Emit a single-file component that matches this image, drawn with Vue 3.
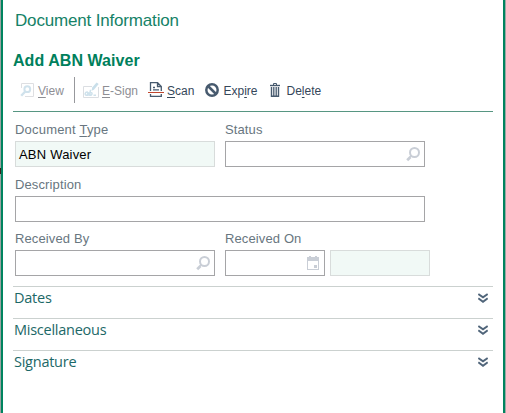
<script setup>
const sections = ['Dates', 'Miscellaneous', 'Signature']
</script>

<template>
  <div class="page">
    <main class="dialog">
      <header class="caption">Document Information</header>
      <h1 class="title">Add ABN Waiver</h1>

      <nav class="toolbar">
        <button class="tool view off" disabled>
          <svg width="14" height="14" viewBox="0 0 14 14" fill="none">
            <path d="M1.5 5V.5H13.5V13.5H5" stroke="#dedfe2" />
            <circle cx="7.3" cy="6.2" r="2.9" stroke="#d0e2ec" stroke-width="2" />
            <path d="M5 8.7L1.2 12.8" stroke="#d0e2ec" stroke-width="2.4" />
          </svg>
          <span><u>V</u>iew</span>
        </button>
        <i class="divider"></i>
        <button class="tool esign off" disabled>
          <svg width="16" height="16" viewBox="0 0 16 16" fill="none">
            <path d="M9 4.5H.5V15.5H15.5V5" stroke="#dbdee2" />
            <path d="M4.8 10c-3-.6-3.4 3.4-1.4 3.3 1.2 0 1.8-3.3 1.8-3.3l-.4 3.2c1.5 0 2.7-4 2.7-5.4l-.8 5.4c2.4.6 3.3-2.9 1-2.8M10.5 13.2h2.5" stroke="#cfe2ec" stroke-width="1.5" />
            <path d="M8.6 8.8l.6-3.2 4.4-5.2 2.1 1.7-4.8 5.6z" fill="#c9dfea" />
          </svg>
          <span><u>E</u>-Sign</span>
        </button>
        <button class="tool scan">
          <svg width="16" height="15" viewBox="0 0 16 15" fill="none">
            <path d="M2.5 9V.7H9.6L13.3 4.4V9M9.5 .8V4.5H13M5 5.5h2M5 7.8h6M2.5 12v2.3h10.8V12" stroke="#475a6e" stroke-width="1.3" />
            <path d="M0 10.5H16" stroke="#c1472e" />
          </svg>
          <span><u>S</u>can</span>
        </button>
        <button class="tool expire">
          <svg width="14" height="14" viewBox="0 0 14 14" fill="none" stroke="#475a6e" stroke-width="2.5">
            <circle cx="7" cy="7" r="5.7" />
            <path d="M3 3L11 11" />
          </svg>
          <span>Exp<u>i</u>re</span>
        </button>
        <button class="tool delete">
          <svg width="10" height="14" viewBox="0 0 10 14" fill="none" stroke="#475a6e">
            <path d="M3.5 2V.5h3V2" />
            <path d="M0 2.5H10" stroke-width="1.4" />
            <path d="M1.5 4V13.3H8.5V4" stroke-width="1.4" />
            <path d="M3.8 4V13M6.2 4V13" stroke-width="1.3" />
          </svg>
          <span>De<u>l</u>ete</span>
        </button>
      </nav>

      <form class="form">
        <div class="row">
          <div class="field">
            <label class="l-type">Document <u>T</u>ype</label>
            <div class="box readonly">ABN Waiver</div>
          </div>
          <div class="field">
            <label>Status</label>
            <div class="box">
              <svg class="lens" width="14" height="15" viewBox="0 0 14 15" fill="none" stroke="#c9ced6">
                <circle cx="8.5" cy="5.5" r="4.5" stroke-width="2" />
                <path d="M5.3 8.7L3.8 10.3" stroke-width="1.5" />
                <path d="M4.5 10L1.2 13.3" stroke-width="2.7" />
              </svg>
            </div>
          </div>
        </div>
        <div class="row">
          <div class="field wide">
            <label>Description</label>
            <div class="box"></div>
          </div>
        </div>
        <div class="row">
          <div class="field">
            <label>Received By</label>
            <div class="box">
              <svg class="lens" width="14" height="15" viewBox="0 0 14 15" fill="none" stroke="#c9ced6">
                <circle cx="8.5" cy="5.5" r="4.5" stroke-width="2" />
                <path d="M5.3 8.7L3.8 10.3" stroke-width="1.5" />
                <path d="M4.5 10L1.2 13.3" stroke-width="2.7" />
              </svg>
            </div>
          </div>
          <div class="field">
            <label>Received On</label>
            <div class="pair">
              <div class="box">
                <svg class="cal" width="12" height="14" viewBox="0 0 12 14">
                  <path fill="#c9ced6" fill-rule="evenodd" d="M2 0h2v1h4V0h2v1h2v13H0V1h2zM1 5v8h10V5z" />
                  <path fill="#c9ced6" d="M7 9h3v3H7z" />
                </svg>
              </div>
              <div class="box readonly"></div>
            </div>
          </div>
        </div>
      </form>

      <section v-for="name in sections" :key="name" class="section">
        <span>{{ name }}</span>
        <svg width="10" height="10" viewBox="0 0 10 10" fill="none" stroke="#50657a" stroke-width="2">
          <path d="M.3 1L5 4.3L9.7 1M.3 5.3L5 8.7L9.7 5.3" />
        </svg>
      </section>
    </main>
  </div>
</template>

<style>
body { overflow: hidden; }
</style>

<style scoped>
* { box-sizing: border-box; }
.page {
  height: 413px;
  padding: 0 1px;
  background: linear-gradient(#9ba3a2 168px, #3c1f1c 168px, #3c1f1c 174px, #9ba3a2 174px) left / 1px 100% no-repeat, #9ba9a5;
  font-family: "Liberation Sans", Arial, sans-serif;
}
.dialog {
  width: 504px;
  height: 413px;
  padding: 0 10px;
  border: solid #00845f;
  border-width: 0 2px;
  background: #fff;
}
.caption {
  height: 49px;
  padding: 11px 0 0 2px;
  font-size: 17px;
  line-height: 20px;
  letter-spacing: -.17px;
  color: #158267;
  white-space: nowrap;
}
.title {
  height: 28px;
  margin: 0;
  padding-top: 2px;
  font-size: 16px;
  line-height: 20px;
  letter-spacing: .06px;
  color: #00805c;
  white-space: nowrap;
}
.toolbar {
  display: flex;
  height: 35px;
  border-bottom: 1px solid #579682;
}
.tool {
  display: flex;
  align-items: flex-start;
  padding: 6px 0 0;
  border: 0;
  background: none;
  font: 12px/17px "Liberation Sans", Arial, sans-serif;
  color: #35475a;
  white-space: nowrap;
}
.tool.off { color: #8e8e94; }
.tool svg { flex: none; }
.tool.esign svg, .tool.scan svg { margin-top: -1px; }
.tool u, label u { text-underline-offset: 2px; text-decoration-skip-ink: none; text-decoration-thickness: 1px; }
.view { width: 61px; padding-left: 7px; gap: 4px; }
.divider { width: 1px; height: 26px; background: #97989c; }
.esign { width: 73px; padding-left: 8px; gap: 3px; }
.scan { width: 56px; gap: 3px; }
.expire { width: 66px; padding-left: 1px; gap: 4.5px; }
.delete { gap: 6.5px; }
.form {
  width: 412px;
  padding: 9px 0 0 2px;
}
.row { display: flex; gap: 10px; }
.row:first-child { height: 46px; margin-bottom: 9px; }
.row:nth-child(2) { height: 54px; }
.row:last-child { height: 45px; }
.field { width: 200px; }
.field.wide { width: 410px; }
label {
  display: block;
  height: 20px;
  font-size: 13px;
  line-height: 18px;
  letter-spacing: .12px;
  color: #687680;
  white-space: nowrap;
}
.l-type { letter-spacing: .2px; }
.box {
  display: flex;
  flex: none;
  align-items: flex-start;
  width: 100%;
  height: 26px;
  padding-left: 3px;
  border: 1px solid #a5a5a7;
  background: #fff;
  font-size: 13px;
  line-height: 25px;
  letter-spacing: .2px;
  color: #000;
}
.readonly { border-color: #d8dcdb; background: #f1f9f6; }
.pair { display: flex; gap: 5px; }
.pair .box { width: 100px; }
.lens { margin: 5px 4px 0 auto; }
.cal { margin: 5px 5px 0 auto; }
.section {
  display: flex;
  justify-content: space-between;
  height: 32px;
  padding: 0 5px 0 1px;
  border-top: 1px solid #cbd1cf;
  font: 14.5px/21px "Open Sans", sans-serif;
  letter-spacing: -.25px;
  color: #1c6867;
}
.section:first-of-type { margin-top: 11px; }
.section svg { margin-top: 6px; }
</style>
